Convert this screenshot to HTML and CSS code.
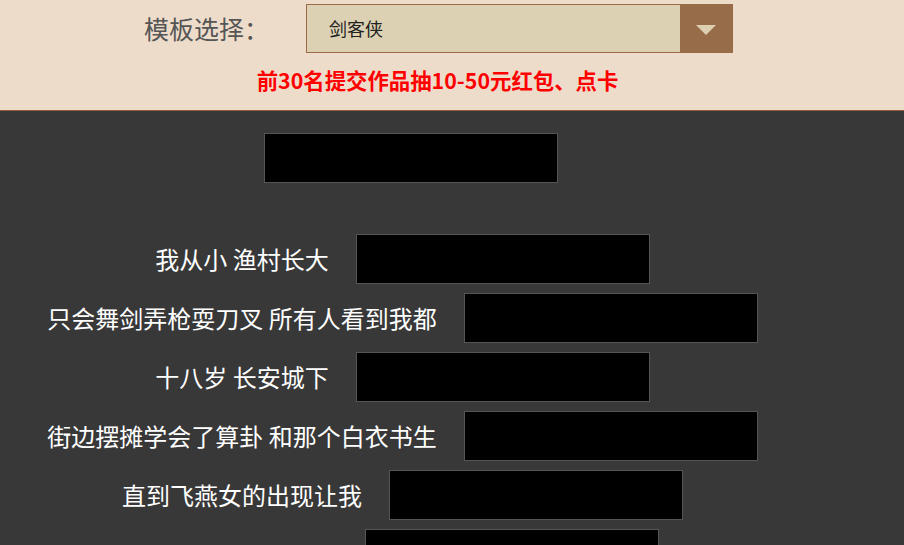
FILE: index.html
```html
<!DOCTYPE html>
<html lang="zh-CN">
<head>
  <meta charset="UTF-8" />
  <meta name="viewport" content="width=device-width, initial-scale=1.0" />
  <title>剑客侠 - 模板</title>
  <link rel="stylesheet" href="styles.css">
</head>
<body>
  <!-- Template picker -->
  <div class="top">
    <div class="picker">
      <span class="picker-label">模板选择：</span>
      <div class="select">
        <span class="select-value">剑客侠</span>
        <span class="select-btn"><i class="arrow"></i></span>
      </div>
    </div>
    <p class="notice">前30名提交作品抽10-50元红包、点卡</p>
  </div>

  <!-- Lyrics form -->
  <div class="main">
    <div class="title-box"></div>
    <div class="lines">
      <div class="line">
        <span class="line-text">我从小 渔村长大</span>
        <div class="line-box"></div>
      </div>
      <div class="line">
        <span class="line-text">只会舞剑弄枪耍刀叉 所有人看到我都</span>
        <div class="line-box"></div>
      </div>
      <div class="line">
        <span class="line-text">十八岁 长安城下</span>
        <div class="line-box"></div>
      </div>
      <div class="line">
        <span class="line-text">街边摆摊学会了算卦 和那个白衣书生</span>
        <div class="line-box"></div>
      </div>
      <div class="line">
        <span class="line-text">直到飞燕女的出现让我</span>
        <div class="line-box"></div>
      </div>
      <div class="line">
        <span class="line-text blank"></span>
        <div class="line-box"></div>
      </div>
    </div>
  </div>
</body>
</html>
```

FILE: styles.css
```css
body {
  margin: 0;
  font-family: "Noto Sans CJK SC", "Noto Sans", sans-serif;
  background-color: #383838;
}
.top {
  background-color: #eedccb;
  height: 111px;
  padding-top: 4px;
  box-sizing: border-box;
  border-bottom: 1px solid #8f6040;
}
.picker {
  display: flex;
  align-items: center;
  height: 49px;
}
.picker-label {
  margin-left: 144px;
  width: 162px;
  font-size: 25px;
  line-height: 49px;
  color: #555;
}
.select {
  display: flex;
  width: 427px;
  height: 49px;
  box-sizing: border-box;
  border: 1px solid #9a6b46;
  background-color: #ddd1b3;
}
.select-value {
  flex: 1;
  padding-left: 22px;
  font-size: 18px;
  line-height: 47px;
  color: #222;
}
.select-btn {
  width: 52px;
  background-color: #976c48;
  display: flex;
  align-items: center;
  justify-content: center;
}
.arrow {
  width: 0;
  height: 0;
  margin-top: 3px;
  border-left: 10px solid transparent;
  border-right: 10px solid transparent;
  border-top: 10px solid #ddd0b0;
}
.notice {
  margin: 12px 0 0;
  padding-right: 29px;
  text-align: center;
  color: red;
  font-weight: bold;
  font-size: 21.4px;
  line-height: 30px;
}
.main {
  padding-top: 22px;
}
.title-box {
  margin-left: 264px;
  width: 294px;
  height: 50px;
  box-sizing: border-box;
  border: 1px solid #555;
  background-color: #000;
}
.lines {
  margin-top: 51px;
}
.line {
  display: flex;
  justify-content: center;
  align-items: center;
  padding-right: 99px;
  margin-bottom: 9px;
}
.line-text {
  margin-right: 27px;
  color: #fff;
  font-size: 24px;
  line-height: 50px;
  white-space: nowrap;
}
.line-text.blank {
  width: 192px;
}
.line-box {
  width: 294px;
  height: 50px;
  box-sizing: border-box;
  border: 1px solid #555;
  background-color: #000;
}
```
